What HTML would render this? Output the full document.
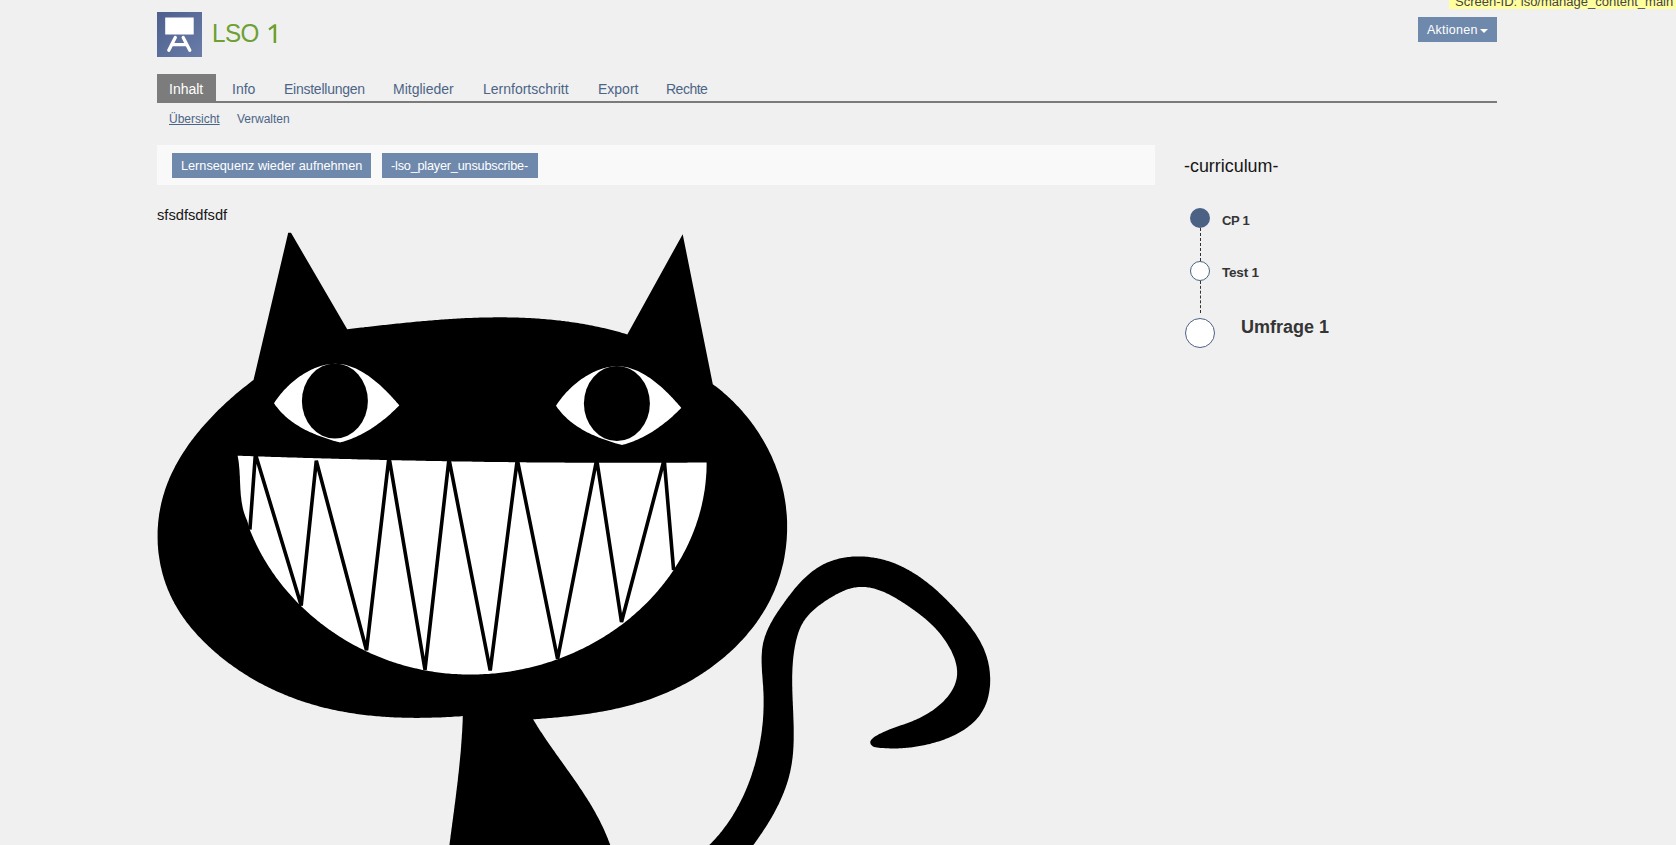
<!DOCTYPE html>
<html><head><meta charset="utf-8">
<style>
html,body{margin:0;padding:0;}
body{width:1676px;height:845px;overflow:hidden;background:#f0f0f0;position:relative;font-family:"Liberation Sans",sans-serif;color:#161616;}
.a{position:absolute;white-space:nowrap;}
#icon{left:157px;top:12px;width:45px;height:45px;background:linear-gradient(135deg,#4d5f8c,#6a7ca8);}
#title{left:212px;top:18px;font-size:25.5px;letter-spacing:-0.6px;transform:scaleX(0.95);transform-origin:0 0;color:#6ea032;line-height:30px;}
#screenid{left:1449px;top:0;height:9px;width:240px;background:#ffff9e;overflow:hidden;}
#screenid{font-size:13px;line-height:13px;color:#454545;text-indent:6px;}
#aktionen{left:1418px;top:17px;width:79px;height:25px;background:#6f89ad;}
#akt{position:absolute;left:9px;top:6px;font-size:12.5px;line-height:15px;color:#fff;letter-spacing:0.25px;}
#caret{position:absolute;left:62px;top:12px;width:0;height:0;border-left:4px solid transparent;border-right:4px solid transparent;border-top:4.5px solid #fff;}
.tab{top:74px;height:27px;}
#tabline{left:157px;top:101px;width:1340px;height:2px;background:#7b7b7b;}
#tab0{left:157px;width:59px;background:#7c7c7c;}
.tt{top:81px;font-size:14px;line-height:16px;color:#4c6586;}
.sub{top:111px;font-size:12px;line-height:16px;color:#4c6586;}
#panel{left:157px;top:145px;width:998px;height:40px;background:#f9f9f9;}
.btn{top:153px;height:25px;background:#6f89ad;}
.bt{top:159px;font-size:12.7px;line-height:15px;color:#fff;}
#txt{left:157px;top:206px;font-size:14.7px;line-height:18px;color:#161616;}
#curr{left:1184px;top:155px;font-size:17.9px;line-height:22px;color:#161616;}
.node{border-radius:50%;box-sizing:border-box;}
.lbl{font-weight:bold;color:#353535;line-height:20px;}
</style></head><body>
<div id="icon" class="a">
<svg width="45" height="45" viewBox="0 0 45 45">
<rect x="8.2" y="5.5" width="28.5" height="17" fill="#fff"/>
<path d="M18.3 25.5 L11.8 38.3 M26.2 25.5 L32.8 38.3 M14.5 32.7 H30" stroke="#fff" stroke-width="3.3" fill="none" stroke-linecap="round"/>
</svg>
</div>
<div id="title" class="a">LSO</div><svg class="a" style="left:0;top:0" width="300" height="60"><path d="M268.4,28.6 L274.2,24.2 L276.2,24.2 L276.2,42.9 L273.6,42.9 L273.6,27.6 L269.6,30.6 Z" fill="#6ea032"/></svg>
<div id="screenid" class="a"><span style="position:relative;top:-5.5px">Screen-ID: lso/manage_content_main</span></div>
<div id="aktionen" class="a"><span id="akt">Aktionen</span><span id="caret"></span></div>

<div id="tabline" class="a"></div>
<div id="tab0" class="a tab"></div>
<div id="t_inhalt" class="a tt" style="left:169px;color:#fff">Inhalt</div>
<div id="t_info" class="a tt" style="left:232px">Info</div>
<div id="t_einst" class="a tt" style="left:284px;letter-spacing:-0.25px">Einstellungen</div>
<div id="t_mitgl" class="a tt" style="left:393px">Mitglieder</div>
<div id="t_lern" class="a tt" style="left:483px">Lernfortschritt</div>
<div id="t_export" class="a tt" style="left:598px">Export</div>
<div id="t_rechte" class="a tt" style="left:666px;letter-spacing:-0.5px">Rechte</div>

<div id="s_ueb" class="a sub" style="left:169px;text-decoration:underline">Übersicht</div>
<div id="s_verw" class="a sub" style="left:237px">Verwalten</div>

<div id="panel" class="a"></div>
<div class="a btn" style="left:172px;width:199px"></div>
<div class="a btn" style="left:382px;width:156px"></div>
<div id="b1" class="a bt" style="left:181px">Lernsequenz wieder aufnehmen</div>
<div id="b2" class="a bt" style="left:391px;letter-spacing:-0.2px">-lso_player_unsubscribe-</div>

<div id="txt" class="a">sfsdfsdfsdf</div>

<div id="curr" class="a">-curriculum-</div>
<div class="a" style="left:1200px;top:228px;height:33px;border-left:1px dashed #333"></div>
<div class="a" style="left:1200px;top:281px;height:32px;border-left:1px dashed #333"></div>
<div class="a node" style="left:1190px;top:208px;width:20px;height:20px;background:#4c6285"></div>
<div class="a node" style="left:1190px;top:261px;width:20px;height:20px;background:#fff;border:1px solid #4c6285"></div>
<div class="a node" style="left:1185px;top:318px;width:30px;height:30px;background:#fff;border:1px solid #4c6285"></div>
<div id="l_cp" class="a lbl" style="left:1222px;top:211px;font-size:13px;letter-spacing:-0.3px">CP 1</div>
<div id="l_test" class="a lbl" style="left:1222px;top:263px;font-size:13.5px;letter-spacing:-0.2px">Test 1</div>
<div id="l_umf" class="a lbl" style="left:1241px;top:317px;font-size:18px">Umfrage 1</div>

<!--CAT--><svg class="a" style="left:0;top:0" width="1676" height="845" viewBox="0 0 1676 845">
<path d="M253.5,380 L288.2,232.8 L291,232.8 L347.2,329.2 L347.2,329.2 L349.2,329.0 L351.2,328.7 L353.2,328.5 L355.2,328.3 L357.2,328.1 L359.2,327.8 L361.2,327.6 L363.2,327.4 L365.2,327.1 L367.2,326.9 L369.1,326.7 L371.1,326.5 L373.2,326.2 L375.2,326.0 L377.2,325.8 L379.2,325.6 L381.2,325.3 L383.2,325.1 L385.2,324.9 L387.2,324.7 L389.2,324.5 L391.2,324.3 L393.2,324.0 L395.2,323.8 L397.2,323.6 L399.2,323.4 L401.2,323.2 L403.2,323.0 L405.3,322.8 L407.3,322.6 L409.3,322.4 L411.3,322.2 L413.3,322.0 L415.3,321.8 L417.3,321.6 L419.3,321.4 L421.3,321.3 L423.4,321.1 L425.4,320.9 L427.4,320.7 L429.4,320.6 L431.4,320.4 L433.4,320.2 L435.4,320.1 L437.5,319.9 L439.5,319.8 L441.5,319.6 L443.5,319.5 L445.5,319.3 L447.5,319.2 L449.6,319.1 L451.6,318.9 L453.6,318.8 L455.6,318.7 L457.6,318.6 L459.6,318.5 L461.7,318.3 L463.7,318.2 L465.7,318.1 L467.7,318.1 L469.7,318.0 L471.7,317.9 L473.8,317.8 L475.8,317.7 L477.8,317.7 L479.8,317.6 L481.8,317.5 L483.8,317.5 L485.8,317.5 L487.9,317.4 L489.9,317.4 L491.9,317.4 L493.9,317.3 L495.9,317.3 L497.9,317.3 L499.9,317.3 L502.0,317.3 L504.0,317.3 L506.0,317.3 L508.0,317.4 L510.0,317.4 L512.0,317.4 L514.0,317.5 L516.0,317.5 L518.0,317.6 L520.0,317.7 L522.1,317.7 L524.1,317.8 L526.1,317.9 L528.1,318.0 L530.1,318.1 L532.1,318.2 L534.1,318.3 L536.1,318.5 L538.1,318.6 L540.1,318.7 L542.1,318.9 L544.1,319.0 L546.1,319.2 L548.1,319.4 L550.1,319.6 L552.1,319.8 L554.1,320.0 L556.1,320.2 L558.1,320.4 L560.1,320.6 L562.1,320.9 L564.1,321.1 L566.1,321.4 L568.1,321.6 L570.0,321.9 L572.0,322.2 L574.0,322.5 L576.0,322.8 L578.0,323.1 L580.0,323.4 L582.0,323.8 L584.0,324.1 L585.9,324.5 L587.9,324.8 L589.9,325.2 L591.9,325.6 L593.9,326.0 L595.8,326.4 L597.8,326.8 L599.8,327.2 L601.8,327.7 L603.7,328.1 L605.7,328.6 L607.7,329.1 L609.6,329.5 L611.6,330.0 L613.6,330.5 L615.5,331.1 L617.5,331.6 L619.5,332.1 L621.4,332.7 L623.4,333.2 L625.3,333.8 L627.3,334.4 L682.7,234.2 L712.8,384.2 L712.8,384.2 L714.4,385.4 L716.0,386.6 L717.6,387.8 L719.2,389.1 L720.7,390.3 L722.3,391.6 L723.8,392.9 L725.3,394.2 L726.8,395.6 L728.3,396.9 L729.8,398.3 L731.2,399.7 L732.7,401.1 L734.1,402.5 L735.5,403.9 L736.9,405.4 L738.3,406.8 L739.7,408.3 L741.0,409.8 L742.4,411.3 L743.7,412.9 L745.0,414.4 L746.3,416.0 L747.6,417.5 L748.8,419.1 L750.1,420.7 L751.3,422.3 L752.5,424.0 L753.7,425.6 L754.9,427.3 L756.0,428.9 L757.1,430.6 L758.3,432.3 L759.4,434.0 L760.4,435.7 L761.5,437.4 L762.6,439.2 L763.6,440.9 L764.6,442.7 L765.6,444.5 L766.5,446.2 L767.5,448.0 L768.4,449.8 L769.3,451.7 L770.2,453.5 L771.1,455.3 L771.9,457.1 L772.7,459.0 L773.5,460.9 L774.3,462.7 L775.1,464.6 L775.8,466.5 L776.5,468.4 L777.2,470.3 L777.9,472.2 L778.6,474.1 L779.2,476.0 L779.8,477.9 L780.4,479.9 L780.9,481.8 L781.5,483.8 L782.0,485.7 L782.5,487.7 L782.9,489.6 L783.4,491.6 L783.8,493.6 L784.2,495.5 L784.5,497.5 L784.9,499.5 L785.2,501.5 L785.5,503.5 L785.8,505.5 L786.0,507.5 L786.2,509.5 L786.4,511.5 L786.6,513.5 L786.8,515.5 L786.9,517.5 L787.0,519.5 L787.1,521.6 L787.1,523.6 L787.1,525.6 L787.1,527.6 L787.1,529.6 L787.1,531.6 L787.0,533.6 L786.9,535.6 L786.8,537.6 L786.7,539.6 L786.5,541.6 L786.3,543.6 L786.1,545.6 L785.9,547.6 L785.6,549.6 L785.3,551.6 L785.0,553.6 L784.7,555.5 L784.4,557.5 L784.0,559.5 L783.6,561.4 L783.2,563.4 L782.7,565.3 L782.2,567.3 L781.7,569.2 L781.2,571.1 L780.7,573.0 L780.1,575.0 L779.5,576.9 L778.9,578.7 L778.3,580.6 L777.6,582.5 L777.0,584.4 L776.2,586.2 L775.5,588.1 L774.8,589.9 L774.0,591.7 L773.2,593.5 L772.4,595.3 L771.5,597.1 L770.7,598.9 L769.8,600.7 L768.9,602.4 L767.9,604.2 L767.0,605.9 L766.0,607.7 L765.0,609.4 L764.0,611.1 L763.0,612.8 L761.9,614.4 L760.8,616.1 L759.8,617.8 L758.6,619.4 L757.5,621.0 L756.4,622.7 L755.2,624.3 L754.0,625.9 L752.8,627.4 L751.6,629.0 L750.3,630.6 L749.0,632.1 L747.8,633.6 L746.5,635.2 L745.2,636.7 L743.8,638.2 L742.5,639.7 L741.1,641.1 L739.7,642.6 L738.3,644.0 L736.9,645.5 L735.5,646.9 L734.1,648.3 L732.6,649.7 L731.1,651.0 L729.6,652.4 L728.1,653.8 L726.6,655.1 L725.1,656.4 L723.5,657.7 L722.0,659.0 L720.4,660.3 L718.8,661.6 L717.2,662.8 L715.6,664.1 L714.0,665.3 L712.4,666.5 L710.7,667.7 L709.1,668.9 L707.4,670.0 L705.8,671.2 L704.1,672.3 L702.4,673.5 L700.7,674.6 L698.9,675.7 L697.2,676.7 L695.5,677.8 L693.7,678.9 L692.0,679.9 L690.2,680.9 L688.4,681.9 L686.6,682.9 L684.8,683.9 L683.0,684.8 L681.2,685.8 L679.4,686.7 L677.6,687.6 L675.8,688.5 L673.9,689.4 L672.1,690.3 L670.2,691.1 L668.4,691.9 L666.5,692.7 L664.7,693.5 L662.8,694.3 L660.9,695.1 L659.0,695.8 L657.1,696.6 L655.2,697.3 L653.3,698.0 L651.4,698.7 L649.5,699.4 L647.6,700.0 L645.7,700.7 L643.8,701.3 L641.8,701.9 L639.9,702.5 L638.0,703.1 L636.0,703.6 L634.1,704.2 L632.2,704.7 L630.2,705.3 L628.3,705.8 L626.3,706.3 L624.4,706.8 L622.4,707.3 L620.4,707.7 L618.5,708.2 L616.5,708.6 L614.5,709.0 L612.6,709.5 L610.6,709.9 L608.6,710.3 L606.6,710.7 L604.7,711.0 L602.7,711.4 L600.7,711.7 L598.7,712.1 L596.7,712.4 L594.7,712.8 L592.7,713.1 L590.7,713.4 L588.8,713.7 L586.8,714.0 L584.8,714.2 L582.8,714.5 L580.8,714.8 L578.8,715.0 L576.8,715.3 L574.8,715.5 L572.8,715.8 L570.8,716.0 L568.8,716.2 L566.8,716.4 L564.8,716.6 L562.8,716.8 L560.9,717.0 L558.9,717.2 L556.9,717.4 L554.9,717.6 L552.9,717.8 L550.9,717.9 L548.9,718.1 L546.9,718.3 L545.0,718.4 L543.0,718.6 L541.0,718.7 L539.0,718.9 L537.0,719.0 L535.1,719.2 L533.1,719.3 L533.1,719.3 L534.1,721.0 L535.2,722.8 L536.3,724.5 L537.3,726.2 L538.4,728.0 L539.5,729.7 L540.6,731.4 L541.8,733.1 L542.9,734.8 L544.0,736.5 L545.2,738.2 L546.3,739.9 L547.4,741.6 L548.6,743.3 L549.8,744.9 L550.9,746.6 L552.1,748.3 L553.3,750.0 L554.5,751.6 L555.6,753.3 L556.8,755.0 L558.0,756.6 L559.2,758.3 L560.4,760.0 L561.6,761.6 L562.8,763.3 L564.0,765.0 L565.1,766.6 L566.3,768.3 L567.5,769.9 L568.7,771.6 L569.9,773.3 L571.1,774.9 L572.2,776.6 L573.4,778.3 L574.6,780.0 L575.7,781.6 L576.9,783.3 L578.1,785.0 L579.2,786.7 L580.3,788.4 L581.5,790.1 L582.6,791.8 L583.7,793.5 L584.8,795.2 L585.9,796.9 L587.0,798.6 L588.1,800.4 L589.2,802.1 L590.2,803.8 L591.3,805.6 L592.3,807.3 L593.3,809.1 L594.3,810.8 L595.3,812.6 L596.3,814.4 L597.3,816.2 L598.3,818.0 L599.2,819.8 L600.1,821.6 L601.0,823.4 L601.9,825.2 L602.8,827.1 L603.7,828.9 L604.5,830.8 L605.3,832.7 L606.1,834.6 L606.9,836.4 L607.7,838.3 L608.4,840.3 L609.2,842.2 L609.9,844.1 L610.6,846.1 L611.2,848.0 L611.9,850.0 L612.5,852.0 L448.5,852 L448.5,852.0 L448.8,850.0 L449.0,848.0 L449.3,845.9 L449.6,843.9 L449.8,841.9 L450.1,839.9 L450.4,837.8 L450.6,835.8 L450.9,833.8 L451.2,831.8 L451.4,829.8 L451.7,827.7 L452.0,825.7 L452.2,823.7 L452.5,821.7 L452.8,819.6 L453.1,817.6 L453.3,815.6 L453.6,813.6 L453.9,811.6 L454.1,809.5 L454.4,807.5 L454.6,805.5 L454.9,803.5 L455.2,801.4 L455.4,799.4 L455.7,797.4 L455.9,795.4 L456.2,793.3 L456.4,791.3 L456.7,789.3 L456.9,787.3 L457.2,785.2 L457.4,783.2 L457.7,781.2 L457.9,779.1 L458.1,777.1 L458.3,775.1 L458.6,773.1 L458.8,771.0 L459.0,769.0 L459.2,767.0 L459.4,764.9 L459.6,762.9 L459.8,760.9 L460.0,758.9 L460.2,756.8 L460.4,754.8 L460.6,752.8 L460.8,750.7 L460.9,748.7 L461.1,746.7 L461.2,744.6 L461.4,742.6 L461.5,740.6 L461.7,738.5 L461.8,736.5 L461.9,734.4 L462.1,732.4 L462.2,730.4 L462.3,728.3 L462.4,726.3 L462.5,724.3 L462.6,722.2 L462.7,720.2 L462.7,718.1 L462.8,716.1 L462.8,716.1 L460.8,716.2 L458.8,716.4 L456.8,716.5 L454.8,716.6 L452.8,716.8 L450.8,716.9 L448.8,717.0 L446.8,717.1 L444.8,717.2 L442.8,717.3 L440.8,717.4 L438.8,717.4 L436.8,717.5 L434.8,717.6 L432.8,717.6 L430.8,717.7 L428.8,717.7 L426.8,717.8 L424.7,717.8 L422.7,717.8 L420.7,717.8 L418.7,717.9 L416.7,717.9 L414.7,717.9 L412.7,717.8 L410.6,717.8 L408.6,717.8 L406.6,717.8 L404.6,717.7 L402.6,717.7 L400.6,717.6 L398.6,717.5 L396.5,717.5 L394.5,717.4 L392.5,717.3 L390.5,717.2 L388.5,717.1 L386.5,716.9 L384.5,716.8 L382.5,716.7 L380.5,716.5 L378.5,716.3 L376.4,716.2 L374.4,716.0 L372.4,715.8 L370.4,715.6 L368.4,715.4 L366.4,715.2 L364.5,714.9 L362.5,714.7 L360.5,714.4 L358.5,714.2 L356.5,713.9 L354.5,713.6 L352.5,713.3 L350.5,713.0 L348.6,712.7 L346.6,712.3 L344.6,712.0 L342.6,711.6 L340.7,711.3 L338.7,710.9 L336.7,710.5 L334.8,710.1 L332.8,709.7 L330.9,709.2 L328.9,708.8 L327.0,708.3 L325.0,707.9 L323.1,707.4 L321.1,706.9 L319.2,706.4 L317.3,705.8 L315.3,705.3 L313.4,704.8 L311.5,704.2 L309.6,703.6 L307.7,703.0 L305.8,702.4 L303.8,701.8 L301.9,701.2 L300.1,700.5 L298.2,699.9 L296.3,699.2 L294.4,698.5 L292.5,697.8 L290.6,697.1 L288.8,696.4 L286.9,695.6 L285.1,694.9 L283.2,694.1 L281.4,693.3 L279.5,692.5 L277.7,691.7 L275.9,690.9 L274.1,690.1 L272.2,689.2 L270.4,688.3 L268.6,687.5 L266.8,686.6 L265.0,685.7 L263.3,684.7 L261.5,683.8 L259.7,682.9 L257.9,681.9 L256.2,680.9 L254.4,679.9 L252.7,678.9 L251.0,677.9 L249.2,676.9 L247.5,675.8 L245.8,674.8 L244.1,673.7 L242.4,672.6 L240.7,671.5 L239.0,670.4 L237.4,669.3 L235.7,668.1 L234.0,667.0 L232.4,665.8 L230.8,664.6 L229.1,663.4 L227.5,662.2 L225.9,660.9 L224.3,659.7 L222.7,658.4 L221.1,657.2 L219.5,655.9 L218.0,654.6 L216.4,653.3 L214.9,651.9 L213.3,650.6 L211.8,649.2 L210.3,647.8 L208.8,646.5 L207.3,645.1 L205.8,643.6 L204.4,642.2 L202.9,640.8 L201.5,639.3 L200.1,637.8 L198.7,636.4 L197.3,634.9 L195.9,633.3 L194.6,631.8 L193.2,630.3 L191.9,628.7 L190.6,627.2 L189.3,625.6 L188.1,624.0 L186.8,622.4 L185.6,620.8 L184.4,619.1 L183.2,617.5 L182.1,615.8 L181.0,614.2 L179.9,612.5 L178.8,610.8 L177.7,609.1 L176.7,607.3 L175.7,605.6 L174.7,603.9 L173.8,602.1 L172.8,600.3 L171.9,598.5 L171.1,596.8 L170.2,594.9 L169.4,593.1 L168.6,591.3 L167.8,589.5 L167.1,587.6 L166.4,585.7 L165.7,583.9 L165.1,582.0 L164.4,580.1 L163.8,578.2 L163.3,576.3 L162.7,574.4 L162.2,572.5 L161.7,570.6 L161.3,568.6 L160.8,566.7 L160.4,564.7 L160.0,562.8 L159.7,560.8 L159.4,558.9 L159.1,556.9 L158.8,554.9 L158.5,553.0 L158.3,551.0 L158.1,549.0 L158.0,547.0 L157.8,545.1 L157.7,543.1 L157.7,541.1 L157.6,539.1 L157.6,537.1 L157.6,535.1 L157.6,533.1 L157.6,531.1 L157.7,529.2 L157.8,527.2 L158.0,525.2 L158.1,523.2 L158.3,521.2 L158.5,519.2 L158.8,517.3 L159.0,515.3 L159.3,513.3 L159.7,511.3 L160.0,509.4 L160.4,507.4 L160.8,505.5 L161.2,503.5 L161.7,501.6 L162.2,499.6 L162.7,497.7 L163.2,495.8 L163.8,493.9 L164.4,492.0 L165.0,490.0 L165.6,488.2 L166.3,486.3 L167.0,484.4 L167.7,482.5 L168.5,480.7 L169.2,478.8 L170.0,477.0 L170.9,475.1 L171.7,473.3 L172.6,471.5 L173.5,469.7 L174.4,467.9 L175.3,466.1 L176.3,464.3 L177.3,462.5 L178.3,460.8 L179.3,459.0 L180.3,457.3 L181.4,455.5 L182.5,453.8 L183.6,452.1 L184.7,450.4 L185.8,448.7 L187.0,447.0 L188.1,445.3 L189.3,443.6 L190.5,442.0 L191.7,440.3 L193.0,438.7 L194.2,437.1 L195.5,435.4 L196.8,433.8 L198.1,432.2 L199.4,430.7 L200.7,429.1 L202.0,427.5 L203.4,426.0 L204.7,424.4 L206.1,422.9 L207.5,421.4 L208.9,419.9 L210.3,418.4 L211.7,416.9 L213.1,415.4 L214.5,413.9 L215.9,412.5 L217.4,411.0 L218.8,409.6 L220.3,408.2 L221.8,406.8 L223.2,405.4 L224.7,404.0 L226.2,402.6 L227.7,401.2 L229.2,399.9 L230.7,398.6 L232.2,397.2 L233.7,395.9 L235.2,394.6 L236.7,393.3 L238.3,392.1 L239.8,390.8 L241.3,389.5 L242.8,388.3 L244.4,387.1 L245.9,385.9 L247.4,384.7 L248.9,383.5 L250.5,382.3 L252.0,381.1 L253.5,380.0 Z" fill="#000"/>
<path d="M704.0,850.0 L704.0,850.0 L705.1,849.0 L706.2,848.0 L707.3,846.9 L708.4,845.9 L709.5,844.8 L710.6,843.8 L711.6,842.7 L712.7,841.6 L713.7,840.5 L714.7,839.4 L715.8,838.3 L716.8,837.1 L717.7,836.0 L718.7,834.9 L719.7,833.7 L720.6,832.5 L721.6,831.4 L722.5,830.2 L723.4,829.0 L724.3,827.8 L725.2,826.6 L726.1,825.4 L727.0,824.2 L727.8,822.9 L728.7,821.7 L729.5,820.5 L730.4,819.2 L731.2,817.9 L732.0,816.7 L732.8,815.4 L733.6,814.1 L734.4,812.8 L735.1,811.5 L735.9,810.2 L736.6,808.9 L737.3,807.6 L738.1,806.3 L738.8,805.0 L739.5,803.6 L740.2,802.3 L740.8,801.0 L741.5,799.6 L742.2,798.2 L742.8,796.9 L743.5,795.5 L744.1,794.2 L744.7,792.8 L745.3,791.4 L745.9,790.0 L746.5,788.6 L747.1,787.2 L747.6,785.8 L748.2,784.4 L748.7,783.0 L749.3,781.6 L749.8,780.2 L750.3,778.8 L750.8,777.4 L751.3,775.9 L751.8,774.5 L752.2,773.1 L752.7,771.6 L753.2,770.2 L753.6,768.8 L754.0,767.3 L754.5,765.9 L754.9,764.4 L755.3,763.0 L755.7,761.5 L756.1,760.1 L756.4,758.6 L756.8,757.2 L757.2,755.7 L757.5,754.3 L757.8,752.8 L758.2,751.3 L758.5,749.9 L758.8,748.4 L759.1,746.9 L759.4,745.5 L759.7,744.0 L759.9,742.5 L760.2,741.1 L760.5,739.6 L760.7,738.1 L760.9,736.7 L761.2,735.2 L761.4,733.7 L761.6,732.2 L761.8,730.8 L762.0,729.3 L762.1,727.8 L762.3,726.3 L762.5,724.8 L762.6,723.4 L762.8,721.9 L762.9,720.4 L763.0,718.9 L763.1,717.4 L763.2,715.9 L763.3,714.4 L763.4,712.9 L763.4,711.4 L763.5,709.9 L763.5,708.4 L763.6,706.9 L763.6,705.4 L763.6,703.9 L763.6,702.4 L763.6,700.9 L763.6,699.4 L763.6,697.9 L763.6,696.3 L763.5,694.8 L763.5,693.3 L763.4,691.8 L763.3,690.2 L763.2,688.7 L763.2,687.2 L763.1,685.6 L762.9,684.1 L762.8,682.6 L762.7,681.0 L762.6,679.5 L762.5,678.0 L762.4,676.4 L762.3,674.9 L762.1,673.3 L762.0,671.8 L761.9,670.3 L761.9,668.8 L761.8,667.2 L761.7,665.7 L761.7,664.2 L761.6,662.7 L761.6,661.2 L761.6,659.7 L761.6,658.2 L761.6,656.7 L761.7,655.2 L761.8,653.7 L761.9,652.2 L762.0,650.8 L762.1,649.3 L762.3,647.9 L762.5,646.4 L762.8,645.0 L763.0,643.6 L763.3,642.2 L763.7,640.8 L764.1,639.4 L764.5,638.0 L764.9,636.6 L765.4,635.3 L765.9,633.9 L766.4,632.6 L766.9,631.2 L767.5,629.9 L768.1,628.6 L768.7,627.2 L769.4,625.9 L770.1,624.6 L770.7,623.3 L771.5,622.0 L772.2,620.7 L772.9,619.4 L773.7,618.1 L774.5,616.8 L775.3,615.6 L776.1,614.3 L776.9,613.0 L777.7,611.8 L778.6,610.5 L779.5,609.2 L780.3,608.0 L781.2,606.7 L782.1,605.4 L783.0,604.2 L783.9,602.9 L784.8,601.6 L785.7,600.4 L786.6,599.1 L787.5,597.9 L788.5,596.6 L789.4,595.4 L790.4,594.2 L791.3,592.9 L792.3,591.7 L793.3,590.5 L794.2,589.3 L795.2,588.1 L796.2,586.9 L797.3,585.8 L798.3,584.6 L799.3,583.5 L800.4,582.3 L801.4,581.2 L802.5,580.1 L803.6,579.1 L804.7,578.0 L805.8,577.0 L806.9,575.9 L808.0,574.9 L809.2,574.0 L810.3,573.0 L811.5,572.1 L812.7,571.1 L813.9,570.3 L815.1,569.4 L816.3,568.5 L817.5,567.7 L818.8,567.0 L820.0,566.2 L821.3,565.5 L822.6,564.8 L823.9,564.1 L825.3,563.5 L826.6,562.8 L827.9,562.3 L829.3,561.7 L830.7,561.2 L832.1,560.7 L833.5,560.2 L834.9,559.8 L836.3,559.4 L837.7,559.0 L839.2,558.6 L840.6,558.3 L842.1,558.0 L843.6,557.7 L845.0,557.5 L846.5,557.3 L848.0,557.1 L849.5,556.9 L851.0,556.7 L852.5,556.6 L854.0,556.5 L855.5,556.5 L857.0,556.4 L858.5,556.4 L860.0,556.4 L861.5,556.5 L863.0,556.5 L864.5,556.6 L866.0,556.7 L867.5,556.8 L869.0,557.0 L870.5,557.2 L872.0,557.4 L873.5,557.6 L875.0,557.9 L876.5,558.1 L878.0,558.4 L879.5,558.7 L881.0,559.1 L882.4,559.4 L883.9,559.8 L885.3,560.2 L886.8,560.7 L888.2,561.1 L889.6,561.6 L891.0,562.1 L892.4,562.6 L893.8,563.1 L895.2,563.6 L896.6,564.2 L898.0,564.8 L899.4,565.4 L900.7,566.0 L902.1,566.7 L903.4,567.3 L904.7,568.0 L906.1,568.7 L907.4,569.4 L908.7,570.1 L910.0,570.9 L911.3,571.6 L912.6,572.4 L913.9,573.2 L915.1,574.0 L916.4,574.8 L917.7,575.6 L918.9,576.5 L920.2,577.3 L921.4,578.2 L922.6,579.1 L923.8,580.0 L925.1,580.9 L926.3,581.8 L927.5,582.8 L928.7,583.7 L929.9,584.7 L931.0,585.6 L932.2,586.6 L933.4,587.6 L934.5,588.6 L935.7,589.6 L936.8,590.6 L938.0,591.6 L939.1,592.7 L940.2,593.7 L941.3,594.7 L942.4,595.8 L943.6,596.9 L944.7,597.9 L945.7,599.0 L946.8,600.1 L947.9,601.2 L949.0,602.3 L950.0,603.4 L951.1,604.5 L952.2,605.6 L953.2,606.7 L954.3,607.8 L955.3,608.9 L956.3,610.0 L957.3,611.2 L958.4,612.3 L959.4,613.4 L960.4,614.6 L961.4,615.7 L962.4,616.8 L963.3,618.0 L964.3,619.1 L965.3,620.3 L966.2,621.4 L967.2,622.6 L968.1,623.7 L969.1,624.9 L970.0,626.1 L970.9,627.3 L971.7,628.5 L972.6,629.7 L973.5,630.9 L974.3,632.1 L975.2,633.3 L976.0,634.5 L976.8,635.7 L977.5,637.0 L978.3,638.2 L979.0,639.5 L979.8,640.8 L980.5,642.1 L981.2,643.4 L981.8,644.7 L982.5,646.0 L983.1,647.3 L983.7,648.6 L984.3,650.0 L984.8,651.4 L985.3,652.8 L985.8,654.1 L986.3,655.6 L986.8,657.0 L987.2,658.4 L987.6,659.9 L988.0,661.3 L988.3,662.8 L988.6,664.3 L988.9,665.8 L989.2,667.3 L989.4,668.9 L989.6,670.4 L989.8,671.9 L989.9,673.5 L990.0,675.0 L990.1,676.6 L990.2,678.1 L990.2,679.7 L990.2,681.3 L990.1,682.8 L990.1,684.4 L990.0,685.9 L989.8,687.5 L989.6,689.0 L989.4,690.5 L989.2,692.0 L988.9,693.5 L988.6,695.0 L988.3,696.5 L987.9,698.0 L987.5,699.4 L987.1,700.9 L986.6,702.3 L986.1,703.7 L985.5,705.1 L984.9,706.4 L984.3,707.7 L983.6,709.1 L982.9,710.3 L982.2,711.6 L981.4,712.8 L980.6,714.0 L979.8,715.2 L978.9,716.4 L978.0,717.5 L977.1,718.6 L976.1,719.7 L975.1,720.7 L974.1,721.8 L973.0,722.8 L971.9,723.7 L970.8,724.7 L969.7,725.6 L968.5,726.6 L967.3,727.4 L966.1,728.3 L964.9,729.2 L963.7,730.0 L962.4,730.8 L961.1,731.6 L959.8,732.3 L958.5,733.1 L957.1,733.8 L955.8,734.5 L954.4,735.2 L953.0,735.8 L951.6,736.5 L950.2,737.1 L948.8,737.7 L947.4,738.3 L945.9,738.8 L944.5,739.4 L943.0,739.9 L941.6,740.4 L940.1,740.9 L938.7,741.4 L937.2,741.8 L935.7,742.3 L934.2,742.7 L932.7,743.1 L931.3,743.5 L929.8,743.9 L928.3,744.2 L926.8,744.6 L925.4,744.9 L923.9,745.2 L922.4,745.5 L921.0,745.8 L919.5,746.1 L918.1,746.3 L916.6,746.6 L915.2,746.8 L913.8,747.0 L912.3,747.2 L910.9,747.4 L909.4,747.5 L908.0,747.7 L906.5,747.8 L905.1,748.0 L903.6,748.1 L902.1,748.2 L900.7,748.2 L899.2,748.3 L897.7,748.4 L896.2,748.4 L894.7,748.4 L893.2,748.4 L891.6,748.4 L890.1,748.4 L888.5,748.3 L886.9,748.3 L885.3,748.2 L883.7,748.1 L882.1,748.0 L880.5,747.9 L878.8,747.8 L877.2,747.6 L875.6,747.3 L874.2,746.9 L873.0,746.4 L871.9,745.6 L871.1,744.7 L870.5,743.7 L870.3,742.6 L870.3,741.5 L870.8,740.5 L871.5,739.4 L872.5,738.4 L873.6,737.4 L874.9,736.5 L876.3,735.7 L877.7,734.9 L879.1,734.1 L880.6,733.4 L882.1,732.7 L883.5,732.0 L884.9,731.4 L886.4,730.8 L887.8,730.2 L889.2,729.6 L890.6,729.1 L892.0,728.6 L893.4,728.0 L894.8,727.5 L896.1,727.1 L897.5,726.6 L898.9,726.1 L900.2,725.6 L901.6,725.1 L902.9,724.7 L904.3,724.2 L905.6,723.7 L907.0,723.2 L908.3,722.7 L909.7,722.2 L911.0,721.7 L912.4,721.2 L913.7,720.6 L915.1,720.1 L916.4,719.5 L917.8,718.8 L919.2,718.2 L920.5,717.5 L921.9,716.8 L923.2,716.1 L924.6,715.3 L926.0,714.6 L927.3,713.8 L928.6,713.0 L930.0,712.1 L931.3,711.2 L932.6,710.4 L933.9,709.4 L935.1,708.5 L936.4,707.5 L937.6,706.6 L938.8,705.6 L940.0,704.5 L941.2,703.5 L942.3,702.4 L943.4,701.4 L944.5,700.3 L945.5,699.1 L946.5,698.0 L947.5,696.9 L948.4,695.7 L949.3,694.5 L950.2,693.3 L951.0,692.1 L951.8,690.8 L952.5,689.6 L953.2,688.3 L953.8,687.0 L954.4,685.7 L954.9,684.4 L955.4,683.0 L955.8,681.7 L956.2,680.3 L956.5,679.0 L956.8,677.6 L956.9,676.2 L957.1,674.8 L957.1,673.3 L957.1,671.9 L957.1,670.5 L956.9,669.0 L956.8,667.6 L956.5,666.1 L956.2,664.6 L955.9,663.2 L955.5,661.7 L955.1,660.2 L954.6,658.8 L954.1,657.3 L953.5,655.9 L952.9,654.4 L952.2,653.0 L951.6,651.5 L950.9,650.1 L950.1,648.7 L949.3,647.3 L948.5,645.9 L947.7,644.5 L946.9,643.2 L946.0,641.8 L945.1,640.5 L944.2,639.2 L943.3,638.0 L942.4,636.7 L941.5,635.5 L940.5,634.3 L939.6,633.1 L938.6,631.9 L937.6,630.8 L936.6,629.7 L935.6,628.6 L934.6,627.5 L933.6,626.5 L932.6,625.5 L931.5,624.4 L930.5,623.4 L929.4,622.5 L928.3,621.5 L927.2,620.5 L926.1,619.6 L925.0,618.6 L923.9,617.7 L922.8,616.8 L921.7,615.9 L920.5,615.0 L919.3,614.1 L918.2,613.2 L917.0,612.3 L915.8,611.4 L914.6,610.6 L913.4,609.7 L912.1,608.8 L910.9,608.0 L909.6,607.1 L908.4,606.2 L907.1,605.3 L905.8,604.5 L904.5,603.6 L903.2,602.7 L901.9,601.9 L900.6,601.1 L899.2,600.2 L897.9,599.4 L896.5,598.6 L895.2,597.8 L893.8,597.0 L892.4,596.2 L891.0,595.5 L889.7,594.8 L888.3,594.1 L886.9,593.4 L885.5,592.7 L884.1,592.1 L882.6,591.5 L881.2,591.0 L879.8,590.4 L878.4,589.9 L876.9,589.4 L875.5,589.0 L874.1,588.6 L872.7,588.2 L871.2,587.9 L869.8,587.6 L868.3,587.4 L866.9,587.2 L865.5,587.0 L864.0,586.9 L862.6,586.9 L861.1,586.9 L859.7,586.9 L858.3,587.0 L856.8,587.2 L855.4,587.4 L854.0,587.6 L852.6,587.9 L851.2,588.3 L849.7,588.7 L848.3,589.1 L846.9,589.6 L845.5,590.1 L844.1,590.7 L842.7,591.3 L841.3,591.9 L840.0,592.5 L838.6,593.2 L837.2,593.9 L835.8,594.6 L834.5,595.4 L833.1,596.2 L831.8,597.0 L830.5,597.8 L829.1,598.6 L827.8,599.4 L826.5,600.3 L825.2,601.1 L823.9,602.0 L822.7,602.9 L821.4,603.8 L820.2,604.7 L818.9,605.6 L817.7,606.5 L816.5,607.5 L815.4,608.5 L814.2,609.4 L813.1,610.4 L812.0,611.5 L810.9,612.5 L809.9,613.6 L808.9,614.7 L807.9,615.8 L807.0,616.9 L806.0,618.0 L805.2,619.2 L804.3,620.4 L803.5,621.6 L802.8,622.9 L802.0,624.2 L801.3,625.5 L800.7,626.8 L800.1,628.2 L799.5,629.5 L799.0,630.9 L798.5,632.3 L798.0,633.8 L797.6,635.2 L797.2,636.6 L796.8,638.1 L796.4,639.6 L796.0,641.0 L795.7,642.5 L795.4,644.0 L795.1,645.4 L794.8,646.9 L794.6,648.4 L794.3,649.9 L794.1,651.3 L793.9,652.8 L793.7,654.3 L793.5,655.8 L793.3,657.3 L793.2,658.8 L793.0,660.3 L792.9,661.8 L792.8,663.3 L792.7,664.8 L792.6,666.3 L792.5,667.8 L792.4,669.3 L792.4,670.8 L792.3,672.3 L792.3,673.8 L792.2,675.3 L792.2,676.8 L792.2,678.3 L792.2,679.8 L792.2,681.3 L792.2,682.8 L792.2,684.3 L792.2,685.8 L792.3,687.3 L792.3,688.8 L792.3,690.4 L792.4,691.9 L792.4,693.4 L792.5,694.9 L792.5,696.4 L792.6,697.9 L792.6,699.4 L792.7,700.9 L792.8,702.5 L792.8,704.0 L792.9,705.5 L793.0,707.0 L793.0,708.5 L793.1,710.0 L793.2,711.5 L793.2,713.1 L793.3,714.6 L793.3,716.1 L793.4,717.6 L793.4,719.1 L793.5,720.6 L793.5,722.1 L793.6,723.6 L793.6,725.1 L793.7,726.7 L793.7,728.2 L793.7,729.7 L793.7,731.2 L793.7,732.7 L793.7,734.2 L793.7,735.7 L793.7,737.2 L793.7,738.7 L793.7,740.2 L793.6,741.7 L793.6,743.2 L793.5,744.7 L793.5,746.1 L793.4,747.6 L793.3,749.1 L793.2,750.6 L793.1,752.1 L793.0,753.6 L792.8,755.1 L792.7,756.5 L792.5,758.0 L792.3,759.5 L792.1,761.0 L791.9,762.4 L791.7,763.9 L791.4,765.4 L791.2,766.8 L790.9,768.3 L790.6,769.8 L790.3,771.2 L790.0,772.7 L789.6,774.1 L789.3,775.6 L788.9,777.0 L788.5,778.5 L788.1,779.9 L787.7,781.3 L787.2,782.8 L786.8,784.2 L786.3,785.6 L785.8,787.1 L785.3,788.5 L784.7,789.9 L784.2,791.3 L783.7,792.7 L783.1,794.1 L782.5,795.5 L781.9,796.9 L781.3,798.3 L780.7,799.7 L780.1,801.1 L779.4,802.5 L778.8,803.9 L778.1,805.2 L777.4,806.6 L776.7,808.0 L776.0,809.3 L775.3,810.7 L774.6,812.0 L773.9,813.4 L773.1,814.7 L772.4,816.0 L771.6,817.4 L770.8,818.7 L770.1,820.0 L769.3,821.3 L768.5,822.6 L767.7,823.9 L766.9,825.2 L766.1,826.5 L765.3,827.8 L764.4,829.1 L763.6,830.3 L762.8,831.6 L761.9,832.9 L761.1,834.1 L760.2,835.3 L759.4,836.6 L758.5,837.8 L757.7,839.0 L756.8,840.3 L755.9,841.5 L755.0,842.7 L754.2,843.9 L753.3,845.0 L752.4,846.2 L751.5,847.4 L750.7,848.6 L749.8,849.7 L748.9,850.9 L748.0,852.0 Z" fill="#000"/>
<path d="M274.0,403.3 L274.0,403.3 L274.8,402.1 L275.6,400.8 L276.5,399.6 L277.3,398.4 L278.2,397.2 L279.2,396.0 L280.1,394.8 L281.1,393.6 L282.1,392.4 L283.1,391.3 L284.1,390.1 L285.2,389.0 L286.3,387.9 L287.4,386.8 L288.5,385.7 L289.7,384.6 L290.8,383.5 L292.0,382.5 L293.2,381.4 L294.5,380.4 L295.7,379.5 L296.9,378.5 L298.2,377.5 L299.5,376.6 L300.8,375.7 L302.1,374.9 L303.4,374.0 L304.8,373.2 L306.1,372.4 L307.5,371.7 L308.8,370.9 L310.2,370.2 L311.6,369.6 L313.0,368.9 L314.4,368.3 L315.8,367.7 L317.2,367.2 L318.6,366.7 L320.1,366.2 L321.5,365.8 L322.9,365.4 L324.4,365.1 L325.8,364.8 L327.3,364.5 L328.7,364.3 L330.2,364.1 L331.6,364.0 L333.1,363.9 L334.5,363.8 L336.0,363.8 L337.4,363.9 L338.9,363.9 L340.3,364.1 L341.8,364.3 L343.2,364.5 L344.6,364.8 L346.1,365.1 L347.5,365.5 L348.9,365.9 L350.3,366.4 L351.7,366.9 L353.1,367.4 L354.5,368.0 L355.9,368.6 L357.3,369.3 L358.6,370.0 L360.0,370.7 L361.4,371.4 L362.7,372.2 L364.0,373.0 L365.4,373.9 L366.7,374.7 L368.0,375.6 L369.3,376.5 L370.6,377.5 L371.9,378.4 L373.1,379.4 L374.4,380.4 L375.6,381.4 L376.9,382.4 L378.1,383.5 L379.3,384.5 L380.5,385.6 L381.7,386.7 L382.8,387.8 L384.0,388.9 L385.1,390.0 L386.2,391.1 L387.3,392.2 L388.4,393.3 L389.5,394.4 L390.6,395.5 L391.6,396.7 L392.6,397.8 L393.6,398.9 L394.6,400.0 L395.6,401.1 L396.5,402.2 L397.5,403.3 L398.4,404.3 L399.3,405.4 L399.3,405.4 L398.2,406.5 L397.2,407.6 L396.1,408.6 L395.0,409.7 L393.8,410.7 L392.7,411.8 L391.6,412.8 L390.5,413.9 L389.3,414.9 L388.1,415.9 L387.0,416.9 L385.8,417.9 L384.6,418.9 L383.4,419.8 L382.2,420.8 L381.0,421.8 L379.7,422.7 L378.5,423.6 L377.2,424.5 L376.0,425.4 L374.7,426.3 L373.4,427.2 L372.1,428.0 L370.8,428.9 L369.5,429.7 L368.2,430.5 L366.9,431.3 L365.5,432.0 L364.2,432.8 L362.8,433.5 L361.5,434.2 L360.1,434.9 L358.7,435.6 L357.3,436.3 L355.9,436.9 L354.5,437.5 L353.1,438.1 L351.7,438.7 L350.3,439.3 L348.8,439.8 L347.4,440.3 L345.9,440.8 L344.5,441.3 L343.0,441.7 L341.5,442.1 L340.0,442.5 L340.0,442.5 L338.5,442.1 L337.1,441.7 L335.6,441.3 L334.1,440.9 L332.6,440.4 L331.2,440.0 L329.7,439.5 L328.2,439.1 L326.8,438.6 L325.3,438.1 L323.9,437.6 L322.4,437.1 L321.0,436.6 L319.5,436.0 L318.1,435.5 L316.6,434.9 L315.2,434.3 L313.8,433.8 L312.4,433.1 L311.0,432.5 L309.6,431.9 L308.2,431.2 L306.8,430.6 L305.4,429.9 L304.1,429.2 L302.7,428.4 L301.4,427.7 L300.0,426.9 L298.7,426.1 L297.4,425.3 L296.1,424.5 L294.9,423.7 L293.6,422.8 L292.4,421.9 L291.1,421.0 L289.9,420.1 L288.7,419.2 L287.6,418.2 L286.4,417.2 L285.2,416.2 L284.1,415.1 L283.0,414.1 L281.9,413.0 L280.9,411.9 L279.8,410.7 L278.8,409.5 L277.8,408.3 L276.8,407.1 L275.8,405.9 L274.9,404.6 L274.0,403.3 Z" fill="#fff"/><ellipse cx="334.9" cy="401.0" rx="33" ry="37.5" fill="#000"/>
<path d="M556.0,405.8 L556.0,405.8 L556.8,404.6 L557.6,403.3 L558.5,402.1 L559.3,400.9 L560.2,399.7 L561.2,398.5 L562.1,397.3 L563.1,396.1 L564.1,394.9 L565.1,393.8 L566.1,392.6 L567.2,391.5 L568.3,390.4 L569.4,389.3 L570.5,388.2 L571.7,387.1 L572.8,386.0 L574.0,385.0 L575.2,383.9 L576.5,382.9 L577.7,382.0 L578.9,381.0 L580.2,380.0 L581.5,379.1 L582.8,378.2 L584.1,377.4 L585.4,376.5 L586.8,375.7 L588.1,374.9 L589.5,374.2 L590.8,373.4 L592.2,372.7 L593.6,372.1 L595.0,371.4 L596.4,370.8 L597.8,370.2 L599.2,369.7 L600.6,369.2 L602.1,368.7 L603.5,368.3 L604.9,367.9 L606.4,367.6 L607.8,367.3 L609.3,367.0 L610.7,366.8 L612.2,366.6 L613.6,366.5 L615.1,366.4 L616.5,366.3 L618.0,366.3 L619.4,366.4 L620.9,366.4 L622.3,366.6 L623.8,366.8 L625.2,367.0 L626.6,367.3 L628.1,367.6 L629.5,368.0 L630.9,368.4 L632.3,368.9 L633.7,369.4 L635.1,369.9 L636.5,370.5 L637.9,371.1 L639.3,371.8 L640.6,372.5 L642.0,373.2 L643.4,373.9 L644.7,374.7 L646.0,375.5 L647.4,376.4 L648.7,377.2 L650.0,378.1 L651.3,379.0 L652.6,380.0 L653.9,380.9 L655.1,381.9 L656.4,382.9 L657.6,383.9 L658.9,384.9 L660.1,386.0 L661.3,387.0 L662.5,388.1 L663.7,389.2 L664.8,390.3 L666.0,391.4 L667.1,392.5 L668.2,393.6 L669.3,394.7 L670.4,395.8 L671.5,396.9 L672.6,398.0 L673.6,399.2 L674.6,400.3 L675.6,401.4 L676.6,402.5 L677.6,403.6 L678.5,404.7 L679.5,405.8 L680.4,406.8 L681.3,407.9 L681.3,407.9 L680.2,409.0 L679.2,410.1 L678.1,411.1 L677.0,412.2 L675.8,413.2 L674.7,414.3 L673.6,415.3 L672.5,416.4 L671.3,417.4 L670.1,418.4 L669.0,419.4 L667.8,420.4 L666.6,421.4 L665.4,422.3 L664.2,423.3 L663.0,424.3 L661.7,425.2 L660.5,426.1 L659.2,427.0 L658.0,427.9 L656.7,428.8 L655.4,429.7 L654.1,430.5 L652.8,431.4 L651.5,432.2 L650.2,433.0 L648.9,433.8 L647.5,434.5 L646.2,435.3 L644.8,436.0 L643.5,436.7 L642.1,437.4 L640.7,438.1 L639.3,438.8 L637.9,439.4 L636.5,440.0 L635.1,440.6 L633.7,441.2 L632.3,441.8 L630.8,442.3 L629.4,442.8 L627.9,443.3 L626.5,443.8 L625.0,444.2 L623.5,444.6 L622.0,445.0 L622.0,445.0 L620.5,444.6 L619.1,444.2 L617.6,443.8 L616.1,443.4 L614.6,442.9 L613.2,442.5 L611.7,442.0 L610.2,441.6 L608.8,441.1 L607.3,440.6 L605.9,440.1 L604.4,439.6 L603.0,439.1 L601.5,438.5 L600.1,438.0 L598.6,437.4 L597.2,436.8 L595.8,436.3 L594.4,435.6 L593.0,435.0 L591.6,434.4 L590.2,433.7 L588.8,433.1 L587.4,432.4 L586.1,431.7 L584.7,430.9 L583.4,430.2 L582.0,429.4 L580.7,428.6 L579.4,427.8 L578.1,427.0 L576.9,426.2 L575.6,425.3 L574.4,424.4 L573.1,423.5 L571.9,422.6 L570.7,421.7 L569.6,420.7 L568.4,419.7 L567.2,418.7 L566.1,417.6 L565.0,416.6 L563.9,415.5 L562.9,414.4 L561.8,413.2 L560.8,412.0 L559.8,410.8 L558.8,409.6 L557.8,408.4 L556.9,407.1 L556.0,405.8 Z" fill="#fff"/><ellipse cx="616.9" cy="403.5" rx="33" ry="37.5" fill="#000"/>
<path d="M237.6,455.7 L237.6,455.7 L239.6,455.8 L241.6,455.8 L243.6,455.9 L245.6,456.0 L247.7,456.0 L249.7,456.1 L251.7,456.2 L253.7,456.3 L255.7,456.3 L257.7,456.4 L259.7,456.5 L261.7,456.5 L263.8,456.6 L265.8,456.7 L267.8,456.7 L269.8,456.8 L271.8,456.9 L273.8,456.9 L275.8,457.0 L277.8,457.0 L279.9,457.1 L281.9,457.2 L283.9,457.2 L285.9,457.3 L287.9,457.4 L289.9,457.4 L291.9,457.5 L293.9,457.6 L296.0,457.6 L298.0,457.7 L300.0,457.7 L302.0,457.8 L304.0,457.9 L306.0,457.9 L308.0,458.0 L310.0,458.0 L312.1,458.1 L314.1,458.2 L316.1,458.2 L318.1,458.3 L320.1,458.3 L322.1,458.4 L324.1,458.4 L326.1,458.5 L328.2,458.6 L330.2,458.6 L332.2,458.7 L334.2,458.7 L336.2,458.8 L338.2,458.8 L340.2,458.9 L342.2,458.9 L344.3,459.0 L346.3,459.0 L348.3,459.1 L350.3,459.1 L352.3,459.2 L354.3,459.3 L356.3,459.3 L358.3,459.4 L360.4,459.4 L362.4,459.5 L364.4,459.5 L366.4,459.6 L368.4,459.6 L370.4,459.7 L372.4,459.7 L374.4,459.8 L376.5,459.8 L378.5,459.8 L380.5,459.9 L382.5,459.9 L384.5,460.0 L386.5,460.0 L388.5,460.1 L390.5,460.1 L392.6,460.2 L394.6,460.2 L396.6,460.3 L398.6,460.3 L400.6,460.3 L402.6,460.4 L404.6,460.4 L406.6,460.5 L408.7,460.5 L410.7,460.6 L412.7,460.6 L414.7,460.6 L416.7,460.7 L418.7,460.7 L420.7,460.8 L422.7,460.8 L424.8,460.8 L426.8,460.9 L428.8,460.9 L430.8,461.0 L432.8,461.0 L434.8,461.0 L436.8,461.1 L438.8,461.1 L440.9,461.1 L442.9,461.2 L444.9,461.2 L446.9,461.3 L448.9,461.3 L450.9,461.3 L452.9,461.4 L455.0,461.4 L457.0,461.4 L459.0,461.5 L461.0,461.5 L463.0,461.5 L465.0,461.6 L467.0,461.6 L469.0,461.6 L471.1,461.6 L473.1,461.7 L475.1,461.7 L477.1,461.7 L479.1,461.8 L481.1,461.8 L483.1,461.8 L485.1,461.9 L487.2,461.9 L489.2,461.9 L491.2,461.9 L493.2,462.0 L495.2,462.0 L497.2,462.0 L499.2,462.0 L501.2,462.1 L503.3,462.1 L505.3,462.1 L507.3,462.1 L509.3,462.2 L511.3,462.2 L513.3,462.2 L515.3,462.2 L517.4,462.3 L519.4,462.3 L521.4,462.3 L523.4,462.3 L525.4,462.3 L527.4,462.4 L529.4,462.4 L531.4,462.4 L533.5,462.4 L535.5,462.4 L537.5,462.5 L539.5,462.5 L541.5,462.5 L543.5,462.5 L545.5,462.5 L547.5,462.5 L549.6,462.6 L551.6,462.6 L553.6,462.6 L555.6,462.6 L557.6,462.6 L559.6,462.6 L561.6,462.6 L563.7,462.6 L565.7,462.7 L567.7,462.7 L569.7,462.7 L571.7,462.7 L573.7,462.7 L575.7,462.7 L577.7,462.7 L579.8,462.7 L581.8,462.7 L583.8,462.8 L585.8,462.8 L587.8,462.8 L589.8,462.8 L591.8,462.8 L593.9,462.8 L595.9,462.8 L597.9,462.8 L599.9,462.8 L601.9,462.8 L603.9,462.8 L605.9,462.8 L607.9,462.8 L610.0,462.8 L612.0,462.8 L614.0,462.8 L616.0,462.8 L618.0,462.8 L620.0,462.8 L622.0,462.8 L624.1,462.8 L626.1,462.8 L628.1,462.8 L630.1,462.8 L632.1,462.8 L634.1,462.8 L636.1,462.8 L638.1,462.8 L640.2,462.8 L642.2,462.8 L644.2,462.8 L646.2,462.8 L648.2,462.8 L650.2,462.8 L652.2,462.8 L654.3,462.8 L656.3,462.8 L658.3,462.8 L660.3,462.8 L662.3,462.8 L664.3,462.8 L666.3,462.8 L668.3,462.8 L670.4,462.7 L672.4,462.7 L674.4,462.7 L676.4,462.7 L678.4,462.7 L680.4,462.7 L682.4,462.7 L684.5,462.7 L686.5,462.7 L688.5,462.6 L690.5,462.6 L692.5,462.6 L694.5,462.6 L696.5,462.6 L698.5,462.6 L700.6,462.6 L702.6,462.5 L704.6,462.5 L706.6,462.5 L706.6,462.5 L706.6,464.5 L706.6,466.6 L706.5,468.6 L706.5,470.7 L706.4,472.7 L706.2,474.8 L706.1,476.8 L705.9,478.8 L705.7,480.9 L705.5,482.9 L705.3,484.9 L705.0,487.0 L704.8,489.0 L704.5,491.0 L704.1,493.0 L703.8,495.1 L703.4,497.1 L703.1,499.1 L702.6,501.1 L702.2,503.1 L701.8,505.1 L701.3,507.1 L700.8,509.1 L700.3,511.0 L699.7,513.0 L699.2,515.0 L698.6,516.9 L698.0,518.9 L697.4,520.8 L696.7,522.8 L696.1,524.7 L695.4,526.7 L694.7,528.6 L694.0,530.5 L693.2,532.4 L692.5,534.3 L691.7,536.2 L690.9,538.1 L690.1,539.9 L689.2,541.8 L688.4,543.7 L687.5,545.5 L686.6,547.4 L685.7,549.2 L684.8,551.0 L683.8,552.8 L682.9,554.6 L681.9,556.4 L680.9,558.2 L679.8,559.9 L678.8,561.7 L672.8,571.3 L672.8,571.3 L671.6,573.0 L670.4,574.7 L669.2,576.4 L668.0,578.0 L666.8,579.7 L665.5,581.3 L664.3,583.0 L663.0,584.6 L661.7,586.2 L660.4,587.8 L659.1,589.3 L657.8,590.9 L656.4,592.4 L655.1,594.0 L653.7,595.5 L652.3,597.0 L651.0,598.5 L649.6,599.9 L648.1,601.4 L646.7,602.9 L645.3,604.3 L643.8,605.7 L642.4,607.1 L640.9,608.5 L639.4,609.9 L637.9,611.3 L636.4,612.6 L634.9,614.0 L633.4,615.3 L631.8,616.6 L630.3,617.9 L628.7,619.2 L627.1,620.4 L625.5,621.7 L624.0,622.9 L622.4,624.2 L620.7,625.4 L619.1,626.6 L617.5,627.7 L615.8,628.9 L614.2,630.1 L612.5,631.2 L610.9,632.3 L609.2,633.4 L607.5,634.5 L605.8,635.6 L604.1,636.7 L602.4,637.8 L600.7,638.8 L598.9,639.8 L597.2,640.8 L595.4,641.8 L593.7,642.8 L591.9,643.8 L590.1,644.7 L588.4,645.7 L586.6,646.6 L584.8,647.5 L583.0,648.4 L581.2,649.3 L579.4,650.1 L577.5,651.0 L575.7,651.8 L573.9,652.7 L572.0,653.5 L570.2,654.3 L568.3,655.0 L566.5,655.8 L564.6,656.5 L562.7,657.3 L560.9,658.0 L559.0,658.7 L557.1,659.4 L555.2,660.1 L553.3,660.7 L551.4,661.4 L549.5,662.0 L547.6,662.6 L545.6,663.2 L543.7,663.8 L541.8,664.4 L539.8,664.9 L537.9,665.4 L536.0,666.0 L534.0,666.5 L532.1,667.0 L530.1,667.4 L528.2,667.9 L526.2,668.3 L524.2,668.8 L522.3,669.2 L520.3,669.6 L518.3,670.0 L516.4,670.3 L514.4,670.7 L512.4,671.0 L510.4,671.4 L508.4,671.7 L506.4,672.0 L504.4,672.2 L502.4,672.5 L500.5,672.7 L498.5,673.0 L496.5,673.2 L494.5,673.4 L492.5,673.6 L490.5,673.7 L488.5,673.9 L486.5,674.0 L484.4,674.1 L482.4,674.2 L480.4,674.3 L478.4,674.4 L476.4,674.5 L474.4,674.5 L472.4,674.5 L470.4,674.5 L468.4,674.5 L466.4,674.5 L464.4,674.5 L462.4,674.4 L460.4,674.3 L458.4,674.2 L456.4,674.1 L454.3,674.0 L452.3,673.9 L450.3,673.7 L448.3,673.6 L446.3,673.4 L444.4,673.2 L442.4,673.0 L440.4,672.7 L438.4,672.5 L436.4,672.2 L434.4,671.9 L432.4,671.6 L430.4,671.3 L428.5,671.0 L426.5,670.6 L424.5,670.3 L422.5,669.9 L420.6,669.5 L418.6,669.1 L416.6,668.6 L414.7,668.2 L412.7,667.7 L410.8,667.3 L408.8,666.8 L406.9,666.2 L404.9,665.7 L403.0,665.2 L401.1,664.6 L399.2,664.0 L397.2,663.4 L395.3,662.8 L393.4,662.2 L391.5,661.5 L389.6,660.9 L387.7,660.2 L385.8,659.5 L383.9,658.8 L382.1,658.1 L380.2,657.3 L378.3,656.6 L376.5,655.8 L374.6,655.0 L372.8,654.2 L370.9,653.4 L369.1,652.6 L367.3,651.7 L365.4,650.9 L363.6,650.0 L361.8,649.1 L360.0,648.2 L358.2,647.3 L356.4,646.3 L354.7,645.4 L352.9,644.4 L351.1,643.4 L349.4,642.4 L347.6,641.4 L345.9,640.4 L344.2,639.4 L342.4,638.3 L340.7,637.2 L339.0,636.2 L337.3,635.1 L335.7,634.0 L334.0,632.8 L332.3,631.7 L330.7,630.6 L329.0,629.4 L327.4,628.2 L325.7,627.0 L324.1,625.8 L322.5,624.6 L320.9,623.4 L319.3,622.1 L317.8,620.9 L316.2,619.6 L314.7,618.3 L313.1,617.0 L311.6,615.7 L310.1,614.4 L308.6,613.1 L307.1,611.7 L305.6,610.3 L304.1,609.0 L302.6,607.6 L301.2,606.2 L299.8,604.8 L298.3,603.4 L296.9,601.9 L295.5,600.5 L294.1,599.0 L292.8,597.6 L291.4,596.1 L290.1,594.6 L288.7,593.1 L287.4,591.6 L286.1,590.0 L284.8,588.5 L283.5,586.9 L282.3,585.4 L281.0,583.8 L279.8,582.2 L278.5,580.6 L277.3,579.0 L276.1,577.4 L275.0,575.8 L273.8,574.1 L272.6,572.5 L271.5,570.8 L270.4,569.1 L269.3,567.5 L268.2,565.8 L267.1,564.1 L266.1,562.3 L265.0,560.6 L264.0,558.9 L263.0,557.1 L262.0,555.4 L261.0,553.6 L260.1,551.9 L259.1,550.1 L258.2,548.3 L257.3,546.5 L256.4,544.7 L255.5,542.8 L254.7,541.0 L253.8,539.2 L253.0,537.3 L252.2,535.4 L251.4,533.6 L250.6,531.7 L249.9,529.8 L247.1,520.6 L247.1,520.6 L246.2,518.6 L245.4,516.6 L244.7,514.6 L244.0,512.5 L243.4,510.5 L242.9,508.4 L242.5,506.4 L242.1,504.3 L241.7,502.2 L241.4,500.1 L241.2,498.0 L240.9,495.9 L240.7,493.8 L240.6,491.7 L240.4,489.6 L240.3,487.5 L240.2,485.3 L240.1,483.2 L240.0,481.1 L239.9,478.9 L239.9,476.8 L239.7,474.7 L239.6,472.6 L239.5,470.4 L239.3,468.3 L239.1,466.2 L238.9,464.1 L238.7,462.0 L238.4,459.9 L238.0,457.8 L237.6,455.7 Z" fill="#fff"/>
<path d="M249.9,529.5 L255.4,454.0 L301.2,605.5 L316.3,460.6 L366.5,650.3 L389.0,457.0 L425.0,669.8 L449.0,459.0 L490.2,670.5 L517.3,459.5 L557.6,659.0 L596.7,459.5 L621.5,622.0 L664.2,459.5 L673.6,570.0" fill="none" stroke="#000" stroke-width="3.6" stroke-linejoin="bevel"/>
</svg><!--/CAT-->
</body></html>
